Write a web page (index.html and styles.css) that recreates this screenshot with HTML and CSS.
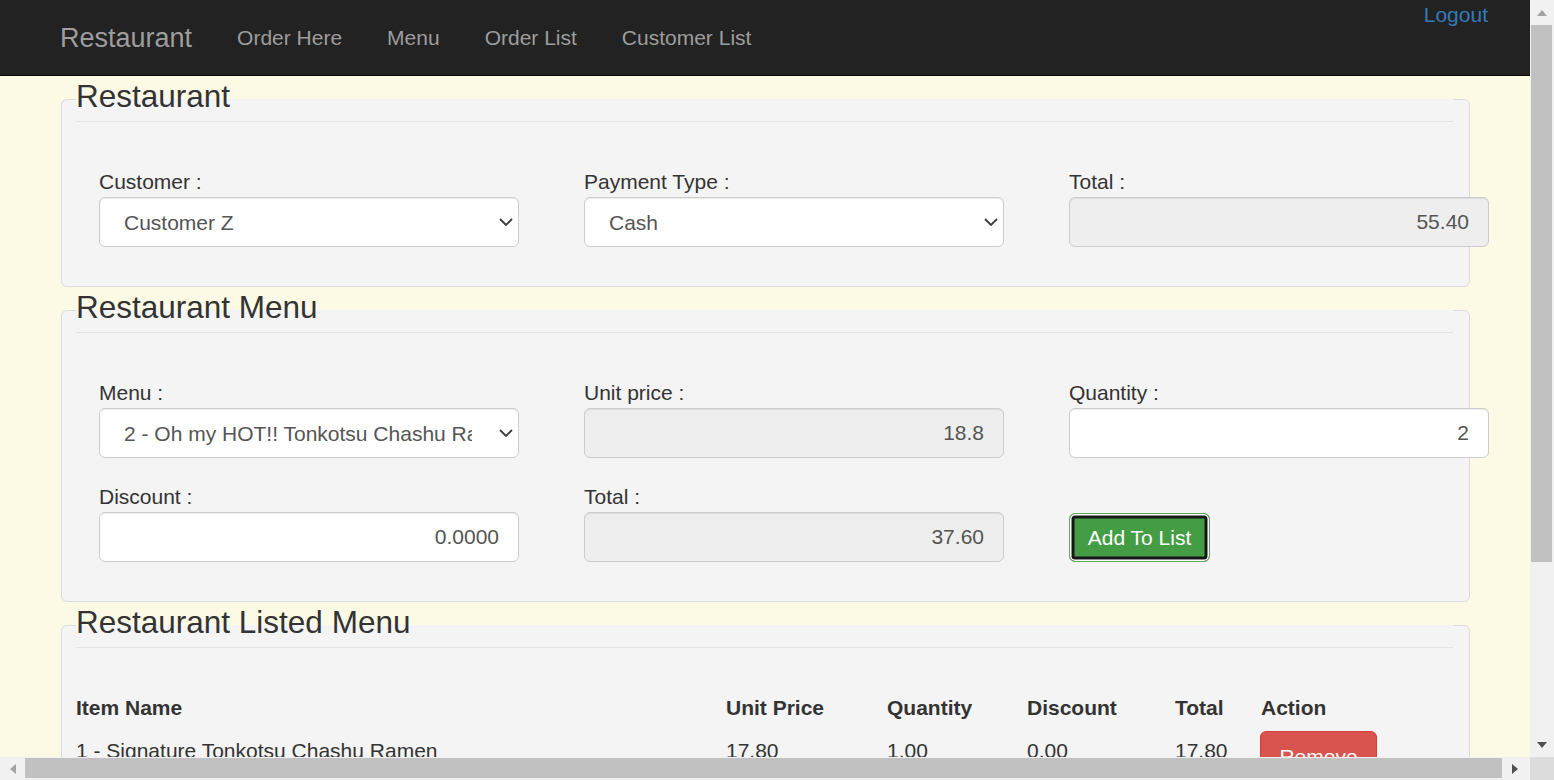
FILE: index.html
```html
<!DOCTYPE html>
<html lang="en">
<head>
<meta charset="utf-8">
<title>Restaurant</title>
<link rel="stylesheet" href="styles.css">
</head>
<body>
<div class="viewport">
  <nav class="navbar">
    <a class="brand" href="#">Restaurant</a>
    <ul class="nav-links">
      <li><a href="#">Order Here</a></li>
      <li><a href="#">Menu</a></li>
      <li><a href="#">Order List</a></li>
      <li><a href="#">Customer List</a></li>
    </ul>
    <a class="logout" href="#">Logout</a>
  </nav>

  <main class="content">
    <fieldset class="panel">
      <legend>Restaurant</legend>
      <div class="form-row">
        <div class="form-group">
          <label>Customer :</label>
          <div class="select-wrap">
            <select class="control select"><option>Customer Z</option></select>
            <svg class="chev" width="14" height="8" viewBox="0 0 14 8"><polyline points="1,1 7,7 13,1" fill="none" stroke="#3c3c3c" stroke-width="1.8"/></svg>
          </div>
        </div>
        <div class="form-group">
          <label>Payment Type :</label>
          <div class="select-wrap">
            <select class="control select"><option>Cash</option></select>
            <svg class="chev" width="14" height="8" viewBox="0 0 14 8"><polyline points="1,1 7,7 13,1" fill="none" stroke="#3c3c3c" stroke-width="1.8"/></svg>
          </div>
        </div>
        <div class="form-group">
          <label>Total :</label>
          <input class="control num readonly" type="text" value="55.40" readonly>
        </div>
      </div>
    </fieldset>

    <fieldset class="panel">
      <legend>Restaurant Menu</legend>
      <div class="form-row">
        <div class="form-group">
          <label>Menu :</label>
          <div class="select-wrap">
            <select class="control select"><option>2 - Oh my HOT!! Tonkotsu Chashu Ramen</option></select>
            <svg class="chev" width="14" height="8" viewBox="0 0 14 8"><polyline points="1,1 7,7 13,1" fill="none" stroke="#3c3c3c" stroke-width="1.8"/></svg>
          </div>
        </div>
        <div class="form-group">
          <label>Unit price :</label>
          <input class="control num readonly" type="text" value="18.8" readonly>
        </div>
        <div class="form-group">
          <label>Quantity :</label>
          <input class="control num" type="text" value="2">
        </div>
        <div class="form-group">
          <label>Discount :</label>
          <input class="control num" type="text" value="0.0000">
        </div>
        <div class="form-group">
          <label>Total :</label>
          <input class="control num readonly" type="text" value="37.60" readonly>
        </div>
        <div class="form-group">
          <label>&nbsp;</label>
          <button class="btn-success" type="button">Add To List</button>
        </div>
      </div>
    </fieldset>

    <fieldset class="panel">
      <legend class="legend-table">Restaurant Listed Menu</legend>
      <table class="list">
        <colgroup>
          <col class="c-name"><col class="c-price"><col class="c-qty"><col class="c-disc"><col class="c-total"><col class="c-action">
        </colgroup>
        <thead>
          <tr><th>Item Name</th><th>Unit Price</th><th>Quantity</th><th>Discount</th><th>Total</th><th>Action</th></tr>
        </thead>
        <tbody>
          <tr>
            <td>1 - Signature Tonkotsu Chashu Ramen</td><td>17.80</td><td>1.00</td><td>0.00</td><td>17.80</td>
            <td class="action"><button class="btn-danger" type="button">Remove</button></td>
          </tr>
        </tbody>
      </table>
    </fieldset>
  </main>
</div>

<div class="vscroll">
  <div class="arrow-box"><svg width="10" height="6" viewBox="0 0 10 6"><polygon points="0,6 5,0 10,6" fill="#a3a3a3"/></svg></div>
  <div class="vthumb"></div>
  <div class="vtrack"></div>
  <div class="arrow-box"><svg width="10" height="6" viewBox="0 0 10 6"><polygon points="0,0 10,0 5,6" fill="#505050"/></svg></div>
</div>
<div class="hscroll">
  <div class="harrow-box"><svg width="6" height="10" viewBox="0 0 6 10"><polygon points="6,0 6,10 0,5" fill="#a3a3a3"/></svg></div>
  <div class="hthumb"></div>
  <div class="harrow-box"><svg width="6" height="10" viewBox="0 0 6 10"><polygon points="0,0 6,5 0,10" fill="#505050"/></svg></div>
</div>
<div class="corner"></div>
</body>
</html>
```

FILE: styles.css
```css
html, body {
  margin: 0;
  padding: 0;
}

body {
  display: grid;
  grid-template-columns: 1530px 24px;
  grid-template-rows: 757px 23px;
  width: 1554px;
  height: 780px;
  overflow: hidden;
  font-family: "Liberation Sans", Arial, Helvetica, sans-serif;
  font-size: 21px;
  color: #333;
  background: #fcf9e4;
}

.viewport {
  overflow: hidden;
  background: #fcf9e4;
}

/* ---------- navbar ---------- */
.navbar {
  display: flex;
  align-items: flex-start;
  height: 75px;
  background: #222;
  border-bottom: 1px solid #080808;
  padding-left: 60px;
  padding-right: 42px;
}

.navbar a {
  text-decoration: none;
}

.brand {
  font-size: 27px;
  line-height: 30px;
  padding: 22.5px 22.5px 22.5px 0;
  color: #9d9d9d;
}

.nav-links {
  display: flex;
  list-style: none;
  margin: 0;
  padding: 0;
}

.nav-links a {
  display: block;
  padding: 22.5px 22.5px;
  line-height: 30px;
  color: #9d9d9d;
}

.logout {
  margin-left: auto;
  line-height: 30px;
  color: #337ab7;
}

/* ---------- panels ---------- */
.content {
  padding-left: 61px;
}

.panel {
  box-sizing: border-box;
  width: 1409px;
  min-width: 0;
  margin: 0;
  padding: 0 16px 14px 14px;
  border: 1px solid #dcdcdc;
  border-radius: 6px;
  background: #f4f4f4;
}

.panel legend {
  display: block;
  box-sizing: border-box;
  width: 100%;
  padding: 0 0 4px;
  margin: 0 0 46px;
  font-size: 31.5px;
  line-height: 41px;
  color: #333;
  border-bottom: 1px solid #e3e3e3;
}

.panel legend.legend-table {
  margin-bottom: 45px;
}

.form-row {
  display: grid;
  grid-template-columns: repeat(3, 485px);
  padding-left: 23px;
}

.form-group {
  margin-bottom: 25px;
}

.form-group label {
  display: block;
  font-size: 21px;
  line-height: 27px;
  padding-bottom: 2px;
  color: #333;
}

.control {
  display: block;
  box-sizing: border-box;
  width: 420px;
  height: 50px;
  margin: 0;
  padding: 0 19px 0 18px;
  border: 1px solid #ccc;
  border-radius: 6px;
  background: #fff;
  box-shadow: inset 0 1px 1px rgba(0, 0, 0, 0.075);
  font-family: "Liberation Sans", Arial, Helvetica, sans-serif;
  font-size: 21px;
  color: #555;
}

.num {
  text-align: right;
}

.readonly {
  background: #eee;
}

.select-wrap {
  position: relative;
  width: 420px;
}

.select {
  -webkit-appearance: none;
  appearance: none;
  padding-left: 24px;
  padding-right: 46px;
  white-space: nowrap;
  overflow: hidden;
}

.chev {
  position: absolute;
  right: 6px;
  top: 21px;
  pointer-events: none;
}

.btn-success {
  display: block;
  box-sizing: border-box;
  width: 141px;
  height: 49px;
  margin-top: 1px;
  padding: 0;
  border: 1px solid #5cab5c;
  border-radius: 6px;
  background: #449d44;
  box-shadow: inset 0 0 0 1.5px #fff, inset 0 0 0 4.5px #161616;
  color: #fff;
  font-family: "Liberation Sans", Arial, Helvetica, sans-serif;
  font-size: 21px;
  line-height: 30px;
}

/* ---------- table ---------- */
.list {
  border-collapse: collapse;
  table-layout: fixed;
  width: 1385px;
}

.c-name { width: 650px; }
.c-price { width: 161px; }
.c-qty { width: 140px; }
.c-disc { width: 148px; }
.c-total { width: 86px; }
.c-action { width: 200px; }

.list th {
  padding: 0 0 8px;
  text-align: left;
  font-weight: bold;
  line-height: 30px;
  vertical-align: top;
}

.list td {
  padding: 5px 0 0;
  line-height: 30px;
  vertical-align: top;
  white-space: nowrap;
}

.list td.action {
  padding-top: 0;
}

.btn-danger {
  display: block;
  box-sizing: border-box;
  width: 117px;
  height: 51px;
  margin-left: -1px;
  padding: 0;
  border: 1px solid #d43f3a;
  border-radius: 6px;
  background: #d9534f;
  color: #fff;
  font-family: "Liberation Sans", Arial, Helvetica, sans-serif;
  font-size: 21px;
}

/* ---------- scrollbars ---------- */
.vscroll {
  display: flex;
  flex-direction: column;
  background: #f1f1f1;
}

.arrow-box {
  height: 25px;
  display: flex;
  align-items: center;
  justify-content: center;
}

.vthumb {
  height: 537px;
  margin: 0 2px 0 1px;
  background: #c1c1c1;
}

.vtrack {
  flex: 1;
}

.hscroll {
  display: flex;
  align-items: stretch;
  background: #f1f1f1;
}

.harrow-box {
  width: 25px;
  display: flex;
  align-items: center;
  justify-content: center;
}

.hthumb {
  width: 1477px;
  margin: 1px 0 2px;
  background: #c1c1c1;
}

.corner {
  background: #dcdcdc;
}
```
